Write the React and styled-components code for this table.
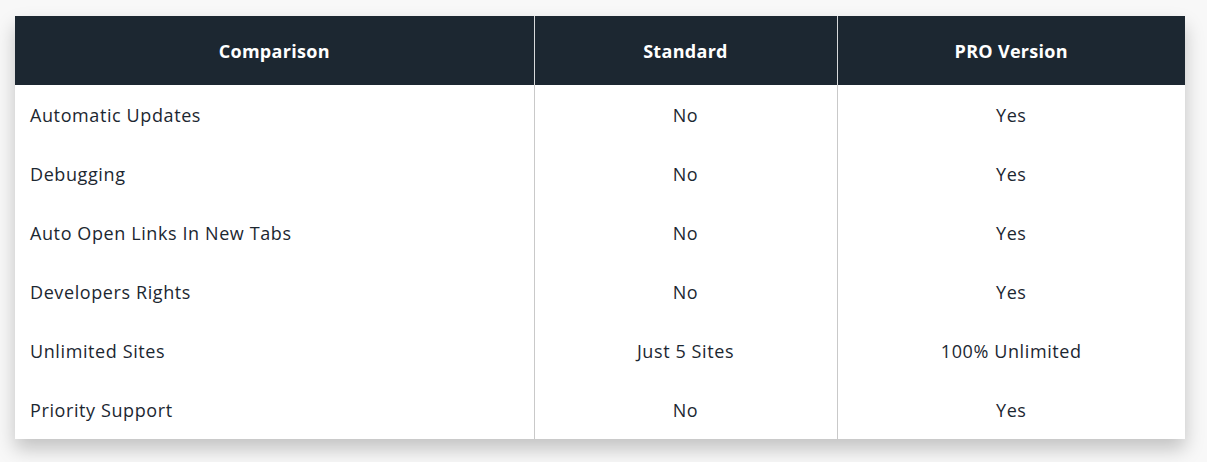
import React from 'react';
import styled, { createGlobalStyle } from 'styled-components';

const GlobalStyle = createGlobalStyle`
  html, body {
    margin: 0;
    background: #f8f8f8;
    font-family: "Open Sans", "Liberation Sans", sans-serif;
  }
`;

const Page = styled.div`
  padding: 16px 22px 30px 15px;
`;

const Card = styled.div`
  width: 1170px;
  background: #fff;
  box-shadow: 0 10px 18px rgba(0, 0, 0, 0.22);
`;

const Table = styled.table`
  width: 100%;
  border-collapse: collapse;
  table-layout: fixed;
`;

const Head = styled.th`
  height: 69px;
  padding: 0;
  background: #1c2731;
  color: #fff;
  font-size: 18px;
  font-weight: 700;
  letter-spacing: 0.3px;
  text-align: center;
  border-left: ${(p) => (p.first ? 'none' : '1px solid #d7d9db')};
`;

const Cell = styled.td`
  height: 59px;
  padding: 0 0 0 ${(p) => (p.left ? '15px' : '0')};
  color: #1c2731;
  font-size: 18px;
  font-weight: 400;
  letter-spacing: 0.6px;
  text-align: ${(p) => (p.left ? 'left' : 'center')};
  border-left: ${(p) => (p.left ? 'none' : '1px solid #c9c9c9')};
`;

const rows = [
  ['Automatic Updates', 'No', 'Yes'],
  ['Debugging', 'No', 'Yes'],
  ['Auto Open Links In New Tabs', 'No', 'Yes'],
  ['Developers Rights', 'No', 'Yes'],
  ['Unlimited Sites', 'Just 5 Sites', '100% Unlimited'],
  ['Priority Support', 'No', 'Yes'],
];

const App = () => {
  return (
    <>
      <GlobalStyle />
      <Page>
        <Card>
          <Table>
            <colgroup>
              <col style={{ width: 519 }} />
              <col style={{ width: 303 }} />
              <col style={{ width: 348 }} />
            </colgroup>
            <thead>
              <tr>
                <Head first>Comparison</Head>
                <Head>Standard</Head>
                <Head>PRO Version</Head>
              </tr>
            </thead>
            <tbody>
              {rows.map(([name, std, pro]) => (
                <tr key={name}>
                  <Cell left>{name}</Cell>
                  <Cell>{std}</Cell>
                  <Cell>{pro}</Cell>
                </tr>
              ))}
            </tbody>
          </Table>
        </Card>
      </Page>
    </>
  );
};

export default App;
